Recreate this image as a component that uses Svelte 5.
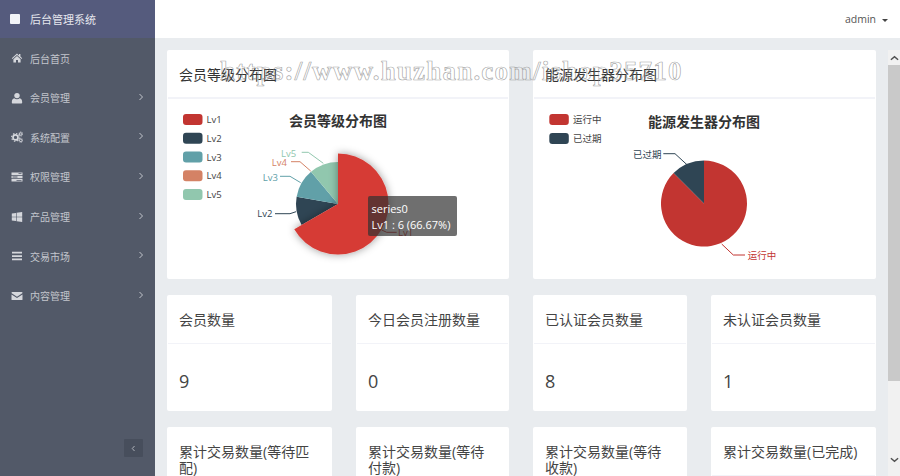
<script lang="ts">
	const menu = [
		{ label: '后台首页', icon: 'home', arrow: false },
		{ label: '会员管理', icon: 'user', arrow: true },
		{ label: '系统配置', icon: 'cogs', arrow: true },
		{ label: '权限管理', icon: 'tasks', arrow: true },
		{ label: '产品管理', icon: 'windows', arrow: true },
		{ label: '交易市场', icon: 'bars', arrow: true },
		{ label: '内容管理', icon: 'mail', arrow: true }
	];

	const stats = [
		{ title: '会员数量', value: '9' },
		{ title: '今日会员注册数量', value: '0' },
		{ title: '已认证会员数量', value: '8' },
		{ title: '未认证会员数量', value: '1' },
		{ title: '累计交易数量(等待匹配)', value: '' },
		{ title: '累计交易数量(等待付款)', value: '' },
		{ title: '累计交易数量(等待收款)', value: '' },
		{ title: '累计交易数量(已完成)', value: '' }
	];

	const RED = '#c23531';
	const NAVY = '#2f4554';
	const TEAL = '#61a0a8';
	const ORANGE = '#d48265';
	const GREEN = '#91c7ae';

	const levels = [
		{ name: 'Lv1', color: RED },
		{ name: 'Lv2', color: NAVY },
		{ name: 'Lv3', color: TEAL },
		{ name: 'Lv4', color: ORANGE },
		{ name: 'Lv5', color: GREEN }
	];

	// angles run clockwise from twelve o'clock
	function slice(cx: number, cy: number, r: number, from: number, to: number) {
		const pt = (deg: number) => {
			const a = (deg * Math.PI) / 180;
			return `${(cx + r * Math.sin(a)).toFixed(2)} ${(cy - r * Math.cos(a)).toFixed(2)}`;
		};
		const large = to - from > 180 ? 1 : 0;
		return `M${cx} ${cy}L${pt(from)}A${r} ${r} 0 ${large} 1 ${pt(to)}Z`;
	}
</script>

<div class="app">
	<aside class="sidebar">
		<div class="brand">
			<span class="brand-mark"></span>
			<span>后台管理系统</span>
		</div>
		<nav class="menu">
			{#each menu as item}
				<div class="menu-item">
					<svg class="menu-icon" viewBox="0 0 12 12" fill="currentColor">
						{#if item.icon === 'home'}
							<path d="M6 1.6 .8 6.2l.6.7L6 2.9l4.6 4 .6-.7L9.4 4.6V2H8v1.4z" />
							<path d="M2.4 7.2 6 4l3.6 3.2v3.3H7V8H5v2.5H2.4z" />
						{:else if item.icon === 'user'}
							<circle cx="6" cy="3.6" r="2.7" />
							<path d="M1.6 11.4c-.5 0-.8-.3-.8-.9 0-2.400.8-4 2.500-4.200.7.600 1.600 1 2.700 1s2-.4 2.700-1c1.700.2 2.500 1.800 2.500 4.200 0 .6-.3.900-.8.900z" />
						{:else if item.icon === 'cogs'}
							<circle cx="4.500" cy="6.400" r="2.500" fill="none" stroke="currentColor" stroke-width="1.700" />
							<circle cx="4.500" cy="6.400" r="3.900" fill="none" stroke="currentColor" stroke-width="1.100" stroke-dasharray="1.500 1.560" />
							<circle cx="9.800" cy="3" r="1.300" fill="none" stroke="currentColor" stroke-width="1" />
							<circle cx="9.800" cy="3" r="2.100" fill="none" stroke="currentColor" stroke-width=".7" stroke-dasharray="1 .65" />
							<circle cx="9.800" cy="9.300" r="1.300" fill="none" stroke="currentColor" stroke-width="1" />
							<circle cx="9.800" cy="9.300" r="2.100" fill="none" stroke="currentColor" stroke-width=".7" stroke-dasharray="1 .65" />
						{:else if item.icon === 'tasks'}
							<path fill-rule="evenodd" d="M.5 1.500h11v2.400H.5zM7.500 2.300v.8h3v-.8zM.5 4.800h11v2.400H.5zM1.500 5.600v.8h5v-.8zM.5 8.100h11v2.400H.5zM5.500 8.900v.8h5v-.8z" />
						{:else if item.icon === 'windows'}
							<path d="M.8 2.500 5 1.900v3.800H.8zM5.600 1.800 11.200 1v4.700H5.600zM.8 6.300H5v3.800l-4.200-.6zM5.600 6.300h5.600V11l-5.600-.8z" />
						{:else if item.icon === 'bars'}
							<path d="M1 1.800h10v1.700H1zM1 5.200h10v1.700H1zM1 8.600h10v1.700H1z" />
						{:else}
							<path d="M.5 2.700c0-.4.300-.7.700-.7h9.600c.4 0 .7.300.7.700 0 .4-.3.700-.6.900L6 6.700 1.100 3.600c-.3-.2-.6-.5-.6-.9z" />
							<path d="M.5 4.400 6 7.900l5.500-3.500v5c0 .4-.3.700-.7.700H1.200c-.4 0-.7-.3-.7-.7z" />
						{/if}
					</svg>
					<span class="menu-label">{item.label}</span>
					{#if item.arrow}
						<svg class="menu-arrow" viewBox="0 0 6 8" fill="none" stroke="currentColor" stroke-width="1">
							<polyline points="1.500 1 4.500 4 1.500 7" />
						</svg>
					{/if}
				</div>
			{/each}
		</nav>
		<div class="collapse-row">
			<button class="collapse" aria-label="collapse">
				<svg viewBox="0 0 6 8" fill="none" stroke="currentColor" stroke-width="1.200">
					<polyline points="4.200 1 1.500 4 4.200 7" />
				</svg>
			</button>
		</div>
	</aside>

	<div class="main">
		<header class="topbar">
			<span class="user">admin</span>
			<span class="caret"></span>
		</header>

		<div class="body">
			<div class="content">
				<div class="charts">
					<section class="card">
						<h5 class="card-title">会员等级分布图</h5>
						<div class="chart">
							<svg viewBox="167 99 342 181" width="342" height="181">
								<defs>
									<filter id="pie-shadow" x="-30%" y="-30%" width="160%" height="160%">
										<feDropShadow dx="0" dy="0" stdDeviation="4" flood-color="#000" flood-opacity="0.4" />
									</filter>
								</defs>
								{#each levels as lv, i}
									<rect x="183" y={114 + i * 18.75} width="19.500" height="11" rx="3" fill={lv.color} />
									<text x="206.500" y={123 + i * 18.75} class="legend">{lv.name}</text>
								{/each}
								<text x="338" y="126" text-anchor="middle" class="chart-title">会员等级分布图</text>

								<path d={slice(338, 204, 42, 240, 280)} fill={NAVY} />
								<path d={slice(338, 204, 42, 280, 320)} fill={TEAL} />
								<path d={slice(338, 204, 42, 320, 360)} fill={GREEN} />
								<path d={slice(338, 204, 50.500, 0, 240)} fill="#d63a35" filter="url(#pie-shadow)" />

								<polyline class="guide" stroke={GREEN} points="301.700,152.300 308.300,152.300 323.300,163.300" />
								<polyline class="guide" stroke={ORANGE} points="291,161.700 300,161.700 310.700,171" />
								<polyline class="guide" stroke={TEAL} points="280,176.300 290,176.300 300.700,182.700" />
								<polyline class="guide" stroke={NAVY} points="275,213.700 290,213.700 296,211.700" />
								<polyline class="guide" stroke={RED} points="381.700,230 386.700,232.300 396.700,232.300" />
								<text x="281" y="156.500" class="label" fill={GREEN}>Lv5</text>
								<text x="271.700" y="166" class="label" fill={ORANGE}>Lv4</text>
								<text x="262.700" y="180.500" class="label" fill={TEAL}>Lv3</text>
								<text x="257.300" y="217" class="label" fill={NAVY}>Lv2</text>
								<text x="398" y="235.500" class="label" fill={RED}>Lv1</text>
							</svg>
							<div class="tooltip">series0<br />Lv1 : 6 (66.67%)</div>
						</div>
					</section>

					<section class="card">
						<h5 class="card-title">能源发生器分布图</h5>
						<div class="chart">
							<svg viewBox="533 99 343 181" width="343" height="181">
								<rect x="549.300" y="114" width="19.500" height="11" rx="3" fill={RED} />
								<text x="573" y="123" class="legend">运行中</text>
								<rect x="549.300" y="133" width="19.500" height="11" rx="3" fill={NAVY} />
								<text x="573" y="142" class="legend">已过期</text>
								<text x="704" y="127" text-anchor="middle" class="chart-title">能源发生器分布图</text>

								<path d={slice(704, 203.500, 43, 0, 315)} fill={RED} />
								<path d={slice(704, 203.500, 43, 315, 360)} fill={NAVY} />

								<polyline class="guide" stroke={NAVY} points="663.300,153.700 675,153.700 687.300,165" />
								<polyline class="guide" stroke={RED} points="721.700,244 733.300,255 745,255" />
								<text x="633" y="158" class="label" fill={NAVY}>已过期</text>
								<text x="747.700" y="258.500" class="label" fill={RED}>运行中</text>
							</svg>
						</div>
					</section>
				</div>

				<div class="stats">
					{#each stats as stat}
						<section class="card">
							<h5 class="card-title">{stat.title}</h5>
							<div class="stat-value">{stat.value}</div>
						</section>
					{/each}
				</div>
			</div>

			<div class="scrollbar">
				<div class="scroll-btn">
					<svg viewBox="0 0 10 6" fill="none" stroke="currentColor" stroke-width="1.600">
						<polyline points="1,5 5,1.500 9,5" />
					</svg>
				</div>
				<div class="scroll-thumb"></div>
				<div class="scroll-rest">
					<svg viewBox="0 0 10 6" fill="none" stroke="currentColor" stroke-width="1.600">
						<polyline points="1,1 5,4.500 9,1" />
					</svg>
				</div>
			</div>
		</div>
	</div>

	<div class="watermark">https://www.huzhan.com/ishop35710</div>
</div>

<style>
	:global(body) {
		margin: 0;
		overflow: hidden;
	}

	.app {
		display: flex;
		width: 900px;
		height: 476px;
		overflow: hidden;
		position: relative;
		font-family: 'Open Sans', 'Noto Sans CJK SC', sans-serif;
		background: #e9ecef;
	}

	/* sidebar */
	.sidebar {
		width: 155px;
		flex: none;
		display: flex;
		flex-direction: column;
		background: #525968;
		color: #c3c6cd;
	}

	.brand {
		height: 38px;
		flex: none;
		display: flex;
		align-items: center;
		gap: 10px;
		padding-left: 10px;
		font-size: 11px;
		color: #e6e7ee;
		background: #555b7d;
	}

	.brand-mark {
		width: 10px;
		height: 10px;
		border-radius: 1px;
		background: #f2f4f8;
	}

	.menu {
		padding-top: 0.4px;
	}

	.menu-item {
		height: 39.6px;
		box-sizing: border-box;
		display: flex;
		align-items: center;
		padding: 0 11px 0 10.500px;
		font-size: 10px;
	}

	.menu-icon {
		width: 12px;
		height: 12px;
		margin-right: 7.500px;
		flex: none;
		color: #d5d7dc;
	}

	.menu-label {
		flex: 1;
	}

	.menu-arrow {
		width: 6px;
		height: 8px;
		margin-bottom: 2px;
	}

	.collapse-row {
		margin-top: auto;
		display: flex;
		justify-content: flex-end;
		padding: 0 12px 19px 0;
	}

	.collapse {
		width: 19px;
		height: 18px;
		padding: 0;
		border: 0;
		border-radius: 1px;
		display: flex;
		align-items: center;
		justify-content: center;
		background: #474e5c;
		color: #aeb2ba;
	}

	.collapse svg {
		width: 5px;
		height: 7px;
	}

	/* header */
	.main {
		flex: 1;
		min-width: 0;
		display: flex;
		flex-direction: column;
	}

	.topbar {
		height: 38px;
		flex: none;
		background: #fff;
		display: flex;
		align-items: center;
		justify-content: flex-end;
		gap: 6px;
		padding-right: 12px;
		font-size: 10.500px;
		color: #555;
	}

	.caret {
		width: 0;
		height: 0;
		margin-top: 2px;
		border-left: 3px solid transparent;
		border-right: 3px solid transparent;
		border-top: 3.500px solid #444;
	}

	.body {
		flex: 1;
		min-height: 0;
		display: flex;
	}

	.content {
		flex: 1;
		min-width: 0;
		padding: 12px 12px 0 12px;
		overflow: hidden;
	}

	.charts {
		display: grid;
		grid-template-columns: 342px 343px;
		column-gap: 24px;
	}

	.stats {
		display: grid;
		grid-template-columns: 165px 153px 154px 165px;
		gap: 16px 24px;
		margin-top: 16px;
	}

	.card {
		background: #fff;
		border-radius: 2px;
		color: #444;
	}

	.card-title {
		margin: 0 1px;
		padding: 17px 11px 15px;
		font-size: 14px;
		font-weight: 400;
		line-height: 15.400px;
		border-bottom: 1px solid #f2f3f8;
	}

	.charts .card-title {
		color: #333;
		border-bottom-width: 2px;
	}

	.chart {
		position: relative;
		height: 180px;
	}

	.chart svg {
		display: block;
	}

	.legend {
		font-size: 9.500px;
		fill: #444;
	}

	.label {
		font-size: 9.500px;
	}

	.chart-title {
		font-size: 14px;
		font-weight: 700;
		fill: #333;
	}

	.guide {
		fill: none;
		stroke-width: 1;
	}

	.tooltip {
		position: absolute;
		left: 200.500px;
		top: 97px;
		width: 89px;
		height: 40px;
		box-sizing: border-box;
		padding: 5px 4px;
		border-radius: 2px;
		background: rgba(50, 50, 50, 0.7);
		color: #fff;
		font-size: 11px;
		line-height: 15.500px;
		white-space: nowrap;
	}

	.stat-value {
		height: 67.600px;
		box-sizing: border-box;
		padding: 25px 12px 0;
		font-size: 18px;
		line-height: 24px;
	}

	/* scrollbar */
	.scrollbar {
		width: 12px;
		flex: none;
		margin-top: 12px;
		display: flex;
		flex-direction: column;
		background: #f1f1f1;
		color: #505050;
	}

	.scroll-btn {
		height: 15px;
		display: flex;
		align-items: center;
		justify-content: center;
	}

	.scrollbar svg {
		width: 9px;
		height: 6px;
	}

	.scroll-thumb {
		height: 316px;
		background: #c9c9c9;
	}

	.scroll-rest {
		flex: 1;
		display: flex;
		justify-content: center;
		padding-top: 76px;
	}

	.watermark {
		position: absolute;
		left: 220px;
		top: 54px;
		font-family: 'Liberation Serif', serif;
		font-size: 27px;
		font-weight: 700;
		line-height: 34px;
		letter-spacing: 1.200px;
		white-space: nowrap;
		color: transparent;
		-webkit-text-stroke: 0.7px rgba(130, 130, 130, 0.7);
		pointer-events: none;
	}
</style>
